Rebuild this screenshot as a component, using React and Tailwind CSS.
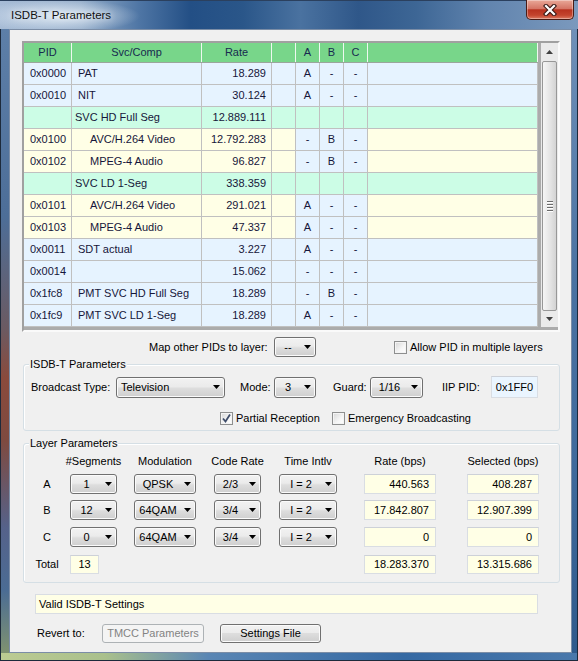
import React from "react"

const ROWS = [
  { pid: "0x0000", svc: "PAT", rate: "18.289", a: "A", b: "-", c: "-", kind: "blue" },
  { pid: "0x0010", svc: "NIT", rate: "30.124", a: "A", b: "-", c: "-", kind: "blue" },
  { pid: "", svc: "SVC HD Full Seg", rate: "12.889.111", a: "", b: "", c: "", kind: "green" },
  { pid: "0x0100", svc: "AVC/H.264 Video", rate: "12.792.283", a: "-", b: "B", c: "-", kind: "yellow" },
  { pid: "0x0102", svc: "MPEG-4 Audio", rate: "96.827", a: "-", b: "B", c: "-", kind: "yellow" },
  { pid: "", svc: "SVC LD 1-Seg", rate: "338.359", a: "", b: "", c: "", kind: "green" },
  { pid: "0x0101", svc: "AVC/H.264 Video", rate: "291.021", a: "A", b: "-", c: "-", kind: "yellow" },
  { pid: "0x0103", svc: "MPEG-4 Audio", rate: "47.337", a: "A", b: "-", c: "-", kind: "yellow" },
  { pid: "0x0011", svc: "SDT actual", rate: "3.227", a: "A", b: "-", c: "-", kind: "blue" },
  { pid: "0x0014", svc: "", rate: "15.062", a: "-", b: "-", c: "-", kind: "blue" },
  { pid: "0x1fc8", svc: "PMT SVC HD Full Seg", rate: "18.289", a: "-", b: "B", c: "-", kind: "blue" },
  { pid: "0x1fc9", svc: "PMT SVC LD 1-Seg", rate: "18.289", a: "A", b: "-", c: "-", kind: "blue" },
]

function Arrow({ up, color = "#000" }) {
  return (
    <svg width="7" height="4" viewBox="0 0 7 4">
      <path d={up ? "M0 4H7L3.5 0Z" : "M0 0H7L3.5 4Z"} fill={color} />
    </svg>
  )
}

function Combo({ w, h = "h-[20px]", text, left }) {
  return (
    <div className={`${w} ${h} shrink-0 flex items-center border border-[#707070] rounded-[3px] bg-[linear-gradient(#f2f2f2,#ebebeb_45%,#dddddd_55%,#cfcfcf)] shadow-[inset_0_0_0_1px_#fbfbfb]`}>
      <span className={`flex-1 whitespace-nowrap ${left ? "pl-[4px]" : "text-center pl-[2px]"}`}>{text}</span>
      <span className="w-[16px] flex justify-center"><Arrow /></span>
    </div>
  )
}

function Field({ w, text, bg = "bg-[#ffffe6]", right = true, h = "h-[20px]" }) {
  return (
    <div className={`${w} ${h} shrink-0 flex items-center border border-[#d9dde3] border-t-[#cdd1d8] ${bg} ${right ? "justify-end pr-[6px]" : "justify-center"}`}>
      {text}
    </div>
  )
}

function Check({ checked, className = "" }) {
  return (
    <div className={`w-[13px] h-[13px] shrink-0 border border-[#8e8f8f] bg-[linear-gradient(135deg,#d6d6d6,#f6f6f6_60%,#ffffff)] shadow-[inset_0_0_0_1px_#f4f4f4] flex items-center justify-center ${className}`}>
      {checked && (
        <svg width="11" height="11" viewBox="0 0 11 11">
          <path d="M2 5.5L4.5 8.5L9 1.5" stroke="#3f4d6a" strokeWidth="1.8" fill="none" />
        </svg>
      )}
    </div>
  )
}

function GridRow({ row }) {
  const bg = row.kind === "green" ? "bg-[#ccfde6]" : row.kind === "yellow" ? "bg-[#ffffe6]" : "bg-[#e6f3ff]"
  const abc = row.kind === "green" ? "bg-[#ccfde6]" : "bg-[#e6f3ff]"
  const pad = row.kind === "green" ? "pl-[3px]" : row.kind === "yellow" ? "pl-[18px]" : "pl-[6px]"
  const cell = "h-full border-r border-[#c0c0c0] flex items-center whitespace-nowrap"
  return (
    <div className={`h-[22px] flex border-b border-[#c0c0c0] ${bg}`}>
      <div className={`${cell} w-[48px] pl-[6px]`}>{row.pid}</div>
      <div className={`${cell} w-[130px] ${pad}`}>{row.svc}</div>
      <div className={`${cell} w-[70px] justify-end pr-[5px]`}>{row.rate}</div>
      <div className={`${cell} w-[24px]`} />
      <div className={`${cell} w-[24px] justify-center ${abc}`}>{row.a}</div>
      <div className={`${cell} w-[24px] justify-center ${abc}`}>{row.b}</div>
      <div className={`${cell} w-[24px] justify-center ${abc}`}>{row.c}</div>
      <div className={`${cell} w-[170px]`} />
    </div>
  )
}

// one line of the Layer Parameters block: label + 6 columns
function LayerRow({ label, cells, className = "" }) {
  return (
    <div className={`flex items-center ${className}`}>
      <div className="w-[46px] flex justify-center whitespace-nowrap">{label}</div>
      <div className="w-[47px] flex justify-center whitespace-nowrap">{cells[0]}</div>
      <div className="w-[62px] ml-[17px] flex justify-center whitespace-nowrap">{cells[1]}</div>
      <div className="w-[47px] ml-[18px] flex justify-center whitespace-nowrap">{cells[2]}</div>
      <div className="w-[58px] ml-[18px] flex justify-center whitespace-nowrap">{cells[3]}</div>
      <div className="w-[72px] ml-[27px] flex justify-center whitespace-nowrap">{cells[4]}</div>
      <div className="w-[72px] ml-[31px] flex justify-center whitespace-nowrap">{cells[5]}</div>
    </div>
  )
}

function GroupBox({ title, className = "", children }) {
  return (
    <div className={`relative ml-[13px] w-[537px] border border-[#d5dfe5] rounded-[3px] shadow-[inset_1px_1px_0_#ffffff] ${className}`}>
      <span className="absolute left-[5px] -top-[8px] px-[1px] bg-[#f0f0f0] leading-[14px]">{title}</span>
      {children}
    </div>
  )
}

export default function App() {
  const layer = [
    { l: "A", seg: "1", mod: "QPSK", cr: "2/3", ti: "I = 2", rate: "440.563", sel: "408.287" },
    { l: "B", seg: "12", mod: "64QAM", cr: "3/4", ti: "I = 2", rate: "17.842.807", sel: "12.907.399" },
    { l: "C", seg: "0", mod: "64QAM", cr: "3/4", ti: "I = 2", rate: "0", sel: "0" },
  ]
  const rowGap = ["mt-[6px]", "mt-[6px]", "mt-[7px]"]

  return (
    <div className="w-[578px] h-[661px] flex flex-col overflow-hidden bg-[#4a6d97] font-['Liberation_Sans',Arial,sans-serif] text-[11px] text-black">
      {/* title bar */}
      <div className="h-[29px] flex items-start border-t border-[#2b405e] bg-[image:radial-gradient(ellipse_80px_17px_at_60px_15px,rgba(226,236,246,0.95),rgba(226,236,246,0)),linear-gradient(90deg,#a7bcd6_0%,#93acc9_14%,#4f76a5_24%,#234f85_33%,#2a5689_42%,#4a72a0_52%,#2f5789_62%,#3d6695_72%,#6184ae_84%,#7b99bd_100%)]">
        <div className="pl-[11px] pt-[6px] text-[11.5px] text-[#111] [text-shadow:0_0_6px_rgba(255,255,255,0.9)]">ISDB-T Parameters</div>
        <div className="ml-auto mr-[4px] w-[48px] h-[20px] -mt-[1px] rounded-b-[5px] border border-t-0 border-[#4a1c15] bg-[linear-gradient(#e9a898,#d57565_45%,#b8321f_52%,#c3442d_80%,#db7a62)] shadow-[inset_0_0_0_1px_rgba(255,255,255,0.35)] flex items-center justify-center">
          <svg width="14" height="12" viewBox="0 0 14 12">
            <path d="M3 2L11 10M11 2L3 10" stroke="#3a1a16" strokeWidth="4.4" strokeLinecap="square" />
            <path d="M3 2L11 10M11 2L3 10" stroke="#ffffff" strokeWidth="2.2" strokeLinecap="square" />
          </svg>
        </div>
      </div>

      <div className="h-[624px] flex">
        <div className="w-[9px] border-l border-[#1d2a3b] bg-[linear-gradient(180deg,#5d7fa8_0%,#4d6e98_30%,#6b5a62_48%,#8a4a3c_56%,#7e4a40_66%,#55628a_80%,#4b6c94_90%,#7f9270_100%)]" />

        {/* client area */}
        <div className="w-[563px] border border-[#7b8da6] bg-[#f0f0f0] flex flex-col">
          {/* PID list */}
          <div className="ml-[12px] mt-[11px] w-[538px] h-[291px] border-2 border-[#a0a0a0] border-r-[#fafafa] border-b-[#fafafa] bg-[#ababab] flex">
            <div className="w-[514px] flex flex-col text-[#16163a]">
              <div className="h-[20px] flex bg-[#78d68a] border-b border-[#9aa69c] text-[#172a4f]">
                <div className="w-[48px] border-r border-[#eef8f0] flex items-center justify-center">PID</div>
                <div className="w-[130px] border-r border-[#eef8f0] flex items-center justify-center">Svc/Comp</div>
                <div className="w-[70px] border-r border-[#eef8f0] flex items-center justify-center">Rate</div>
                <div className="w-[24px] border-r border-[#eef8f0]" />
                <div className="w-[24px] border-r border-[#eef8f0] flex items-center justify-center">A</div>
                <div className="w-[24px] border-r border-[#eef8f0] flex items-center justify-center">B</div>
                <div className="w-[24px] border-r border-[#eef8f0] flex items-center justify-center">C</div>
                <div className="w-[170px] border-r border-[#eef8f0]" />
              </div>
              {ROWS.map((r, i) => <GridRow key={i} row={r} />)}
            </div>
            <div className="w-[3px]" />
            {/* scrollbar */}
            <div className="w-[17px] h-[284px] bg-[#eaeaea] flex flex-col">
              <div className="h-[17px] flex items-center justify-center"><Arrow up color="#404040" /></div>
              <div className="mt-[1px] mx-[1px] h-[250px] rounded-[2px] border border-[#979797] bg-[linear-gradient(90deg,#f5f5f5,#e6e6e6_50%,#d3d3d3)] flex flex-col items-center pt-[139px] gap-[1px]">
                <div className="w-[6px] h-[2px] bg-[#6b6b6b] border-b border-[#ffffff]" />
                <div className="w-[6px] h-[2px] bg-[#6b6b6b] border-b border-[#ffffff]" />
                <div className="w-[6px] h-[2px] bg-[#6b6b6b] border-b border-[#ffffff]" />
                <div className="w-[6px] h-[2px] bg-[#6b6b6b] border-b border-[#ffffff]" />
              </div>
              <div className="flex-1 flex items-center justify-center"><Arrow color="#404040" /></div>
            </div>
          </div>

          <div className="mt-[5px] h-[20px] flex items-center pl-[139px]">
            <span className="w-[125px] whitespace-nowrap">Map other PIDs to layer:</span>
            <Combo w="w-[42px]" text="--" />
            <Check className="ml-[78px]" />
            <span className="ml-[3px] whitespace-nowrap">Allow PID in multiple layers</span>
          </div>

          <GroupBox title="ISDB-T Parameters" className="mt-[7px] h-[67px]">
            <div className="mt-[11px] h-[22px] flex items-center pl-[7px]">
              <span className="w-[85px] whitespace-nowrap">Broadcast Type:</span>
              <Combo w="w-[109px]" h="h-[21px]" text="Television" left />
              <span className="ml-[15px] w-[34px]">Mode:</span>
              <Combo w="w-[42px]" h="h-[21px]" text="3" />
              <span className="ml-[17px] w-[37px]">Guard:</span>
              <Combo w="w-[53px]" h="h-[21px]" text="1/16" />
              <span className="ml-[19px] w-[49px] whitespace-nowrap">IIP PID:</span>
              <Field w="w-[47px]" h="h-[22px]" text="0x1FF0" bg="bg-[#eaf5ff]" right={false} />
            </div>
            <div className="mt-[13px] h-[14px] flex items-center pl-[196px]">
              <Check checked />
              <span className="ml-[3px] w-[96px] whitespace-nowrap">Partial Reception</span>
              <Check />
              <span className="ml-[3px] whitespace-nowrap">Emergency Broadcasting</span>
            </div>
          </GroupBox>

          <GroupBox title="Layer Parameters" className="mt-[12px] h-[140px]">
            <LayerRow
              className="mt-[10px] h-[14px]"
              label=""
              cells={["#Segments", "Modulation", "Code Rate", "Time Intlv", "Rate (bps)", "Selected (bps)"]}
            />
            {layer.map((r, i) => (
              <LayerRow
                key={r.l}
                className={`${rowGap[i]} h-[20px]`}
                label={r.l}
                cells={[
                  <Combo w="w-[47px]" text={r.seg} />,
                  <Combo w="w-[62px]" text={r.mod} />,
                  <Combo w="w-[47px]" text={r.cr} />,
                  <Combo w="w-[58px]" text={r.ti} />,
                  <Field w="w-[72px]" text={r.rate} />,
                  <Field w="w-[72px]" text={r.sel} />,
                ]}
              />
            ))}
            <div className="mt-[8px] h-[19px] flex items-center">
              <div className="w-[46px] flex justify-center">Total</div>
              <Field w="w-[29px]" h="h-[19px]" text="13" right={false} />
              <div className="ml-[265px]"><Field w="w-[72px]" h="h-[19px]" text="18.283.370" /></div>
              <div className="ml-[31px]"><Field w="w-[72px]" h="h-[19px]" text="13.315.686" /></div>
            </div>
          </GroupBox>

          <div className="mt-[11px] ml-[25px] w-[503px] h-[20px] border border-[#d9dde3] bg-[#ffffe6] flex items-center pl-[3px]">
            Valid ISDB-T Settings
          </div>

          <div className="mt-[10px] h-[19px] flex items-center pl-[27px]">
            <span className="w-[65px] whitespace-nowrap">Revert to:</span>
            <div className="w-[102px] h-[19px] border border-[#adb2b5] rounded-[3px] bg-[#f4f4f4] text-[#838383] flex items-center justify-center">TMCC Parameters</div>
            <div className="ml-[16px] w-[101px] h-[19px] border border-[#707070] rounded-[3px] bg-[linear-gradient(#f2f2f2,#ebebeb_50%,#dddddd_50%,#cfcfcf)] shadow-[inset_0_0_0_1px_#fbfbfb] flex items-center justify-center">Settings File</div>
          </div>
        </div>

        <div className="w-[6px] border-r border-[#1d2a3b] bg-[linear-gradient(180deg,#6f90b8_0%,#4a72a2_40%,#3f6a9c_70%,#2f5a8c_100%)]" />
      </div>

      <div className="h-[8px] border-l border-r border-b border-[#1d2a3b] bg-[linear-gradient(90deg,#bccb92_0%,#a9c08c_18%,#5a86b4_36%,#3569a3_70%,#4a78ab_100%)]" />
    </div>
  )
}
